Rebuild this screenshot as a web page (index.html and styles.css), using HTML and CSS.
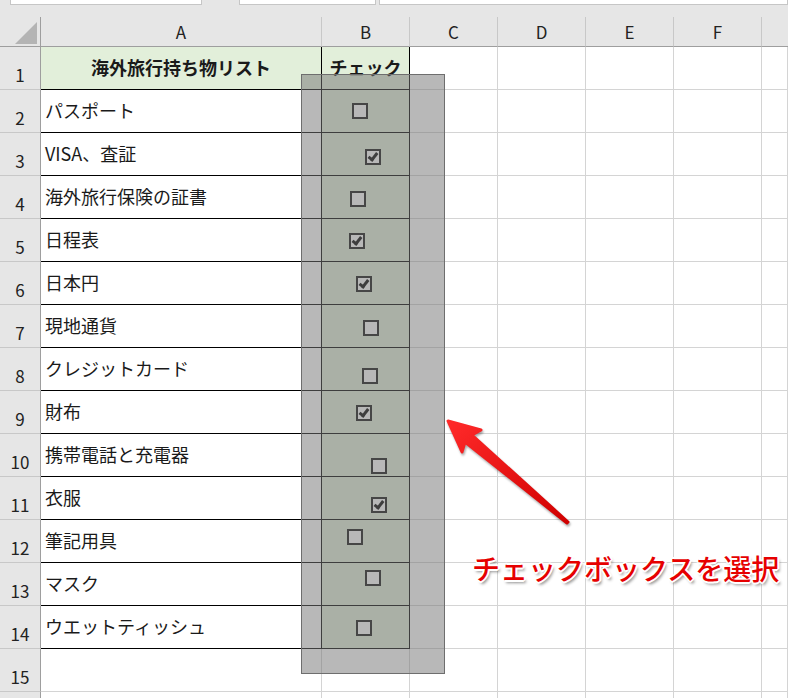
FILE: index.html
```html
<!doctype html>
<html lang="ja">
<head>
	<meta charset="UTF-8">
	<title>海外旅行持ち物リスト</title>
	<link rel="stylesheet" href="styles.css">
</head>
<body>
	<div class="app">
		<div class="toolbar">
			<div class="field name-box"></div>
			<div class="field fx-box"></div>
			<div class="field formula-box"></div>
		</div>

		<div class="sheet">
			<div class="corner"><span class="tri"></span></div>
			<div class="col-head">A</div>
			<div class="col-head">B</div>
			<div class="col-head">C</div>
			<div class="col-head">D</div>
			<div class="col-head">E</div>
			<div class="col-head">F</div>
			<div class="col-head last"></div>

			<div class="row-head">1</div>
			<div class="cell t g bold center">海外旅行持ち物リスト</div>
			<div class="cell t g bold center">チェック</div>
			<div class="cell"></div><div class="cell"></div><div class="cell"></div><div class="cell"></div><div class="cell"></div>

			<div class="row-head">2</div>
			<div class="cell t">パスポート</div><div class="cell t g"></div>
			<div class="cell"></div><div class="cell"></div><div class="cell"></div><div class="cell"></div><div class="cell"></div>

			<div class="row-head">3</div>
			<div class="cell t">VISA、査証</div><div class="cell t g"></div>
			<div class="cell"></div><div class="cell"></div><div class="cell"></div><div class="cell"></div><div class="cell"></div>

			<div class="row-head">4</div>
			<div class="cell t">海外旅行保険の証書</div><div class="cell t g"></div>
			<div class="cell"></div><div class="cell"></div><div class="cell"></div><div class="cell"></div><div class="cell"></div>

			<div class="row-head">5</div>
			<div class="cell t">日程表</div><div class="cell t g"></div>
			<div class="cell"></div><div class="cell"></div><div class="cell"></div><div class="cell"></div><div class="cell"></div>

			<div class="row-head">6</div>
			<div class="cell t">日本円</div><div class="cell t g"></div>
			<div class="cell"></div><div class="cell"></div><div class="cell"></div><div class="cell"></div><div class="cell"></div>

			<div class="row-head">7</div>
			<div class="cell t">現地通貨</div><div class="cell t g"></div>
			<div class="cell"></div><div class="cell"></div><div class="cell"></div><div class="cell"></div><div class="cell"></div>

			<div class="row-head">8</div>
			<div class="cell t">クレジットカード</div><div class="cell t g"></div>
			<div class="cell"></div><div class="cell"></div><div class="cell"></div><div class="cell"></div><div class="cell"></div>

			<div class="row-head">9</div>
			<div class="cell t">財布</div><div class="cell t g"></div>
			<div class="cell"></div><div class="cell"></div><div class="cell"></div><div class="cell"></div><div class="cell"></div>

			<div class="row-head">10</div>
			<div class="cell t">携帯電話と充電器</div><div class="cell t g"></div>
			<div class="cell"></div><div class="cell"></div><div class="cell"></div><div class="cell"></div><div class="cell"></div>

			<div class="row-head">11</div>
			<div class="cell t">衣服</div><div class="cell t g"></div>
			<div class="cell"></div><div class="cell"></div><div class="cell"></div><div class="cell"></div><div class="cell"></div>

			<div class="row-head">12</div>
			<div class="cell t">筆記用具</div><div class="cell t g"></div>
			<div class="cell"></div><div class="cell"></div><div class="cell"></div><div class="cell"></div><div class="cell"></div>

			<div class="row-head">13</div>
			<div class="cell t">マスク</div><div class="cell t g"></div>
			<div class="cell"></div><div class="cell"></div><div class="cell"></div><div class="cell"></div><div class="cell"></div>

			<div class="row-head">14</div>
			<div class="cell t">ウエットティッシュ</div><div class="cell t g"></div>
			<div class="cell"></div><div class="cell"></div><div class="cell"></div><div class="cell"></div><div class="cell"></div>

			<div class="row-head">15</div>
			<div class="cell"></div><div class="cell"></div>
			<div class="cell"></div><div class="cell"></div><div class="cell"></div><div class="cell"></div><div class="cell"></div>

			<div class="row-head"></div>
			<div class="cell"></div><div class="cell"></div>
			<div class="cell"></div><div class="cell"></div><div class="cell"></div><div class="cell"></div><div class="cell"></div>
		</div>

		<!-- フォームコントロールのチェックボックス（シート上に浮いている） -->
		<div class="box" style="left:352px;top:103px"></div>
		<div class="box on" style="left:365px;top:149px"></div>
		<div class="box" style="left:350px;top:191px"></div>
		<div class="box on" style="left:349px;top:233px"></div>
		<div class="box on" style="left:356px;top:276px"></div>
		<div class="box" style="left:363px;top:320px"></div>
		<div class="box" style="left:362px;top:368px"></div>
		<div class="box on" style="left:356px;top:405px"></div>
		<div class="box" style="left:371px;top:458px"></div>
		<div class="box on" style="left:371px;top:497px"></div>
		<div class="box" style="left:347px;top:529px"></div>
		<div class="box" style="left:365px;top:570px"></div>
		<div class="box" style="left:356px;top:620px"></div>

		<div class="selection"></div>

		<svg class="arrow" width="788" height="698" viewBox="0 0 788 698">
			<defs>
				<linearGradient id="red" x1="0" y1="0" x2="1" y2="1">
					<stop offset="0" stop-color="#ff2a2a"/>
					<stop offset="1" stop-color="#d00000"/>
				</linearGradient>
			</defs>
			<polygon points="448,421 481,430 472,435 568,522 567,523 465,442 462,452"
				fill="url(#red)" stroke="url(#red)" stroke-width="3" stroke-linejoin="round"/>
		</svg>

		<div class="callout">チェックボックスを選択</div>
	</div>
</body>
</html>
```

FILE: styles.css
```css
html, body{
	margin: 0;
	height: 100%;
	overflow: hidden;
}
body{
	background: #fff;
	font-family: "Noto Sans CJK JP", "Noto Sans", sans-serif;
	color: #1a1a1a;
}
.app{
	position: relative;
	width: 788px;
	height: 698px;
	overflow: hidden;
}

/* 上の数式バー */
.toolbar{
	display: flex;
	height: 17px;
	background: #e6e6e6;
}
.field{
	height: 4px;
	background: #fff;
	border: 1px solid #c6c6c6;
	border-top: 0;
}
.name-box{
	width: 190px;
	margin-left: 10px;
}
.fx-box{
	width: 135px;
	margin-left: 37px;
}
.formula-box{
	flex: 1;
	margin-left: 3px;
}

/* シート */
.sheet{
	display: grid;
	grid-template-columns: 41px 281px 88px 88px 88px 88px 88px 1fr;
	grid-template-rows: 30px;
	grid-auto-rows: 43px;
	font-size: 18px;
}
.corner{
	position: relative;
	background: #e6e6e6;
	border-right: 1px solid #9e9e9e;
	border-bottom: 1px solid #9e9e9e;
}
.tri{
	position: absolute;
	right: 3px;
	bottom: 2px;
	width: 0;
	height: 0;
	border-left: 22px solid transparent;
	border-bottom: 22px solid #b4b4b4;
}
.col-head{
	display: flex;
	align-items: center;
	justify-content: center;
	padding-bottom: 1px;
	background: #e6e6e6;
	border-right: 1px solid #c8c8c8;
	border-bottom: 1px solid #9e9e9e;
	font-size: 17px;
	color: #222;
}
.col-head.last{
	border-right: 0;
}
.row-head{
	display: flex;
	align-items: center;
	justify-content: center;
	padding-top: 12px;
	background: #e6e6e6;
	border-right: 1px solid #9e9e9e;
	border-bottom: 1px solid #c8c8c8;
	font-size: 17px;
	color: #222;
}
.cell{
	display: flex;
	align-items: center;
	padding: 0 0 3px 4px;
	border-right: 1px solid #d4d4d4;
	border-bottom: 1px solid #d4d4d4;
	white-space: nowrap;
}
.cell.t{
	border-right-color: #000;
	border-bottom-color: #000;
}
.cell.g{
	background: #e2efda;
}
.cell.bold{
	font-weight: bold;
}
.cell.center{
	justify-content: center;
	padding-left: 0;
}

/* チェックボックス */
.box{
	position: absolute;
	width: 12px;
	height: 12px;
	background: #fff;
	border: 2px solid #111;
}
.box.on::after{
	content: "";
	position: absolute;
	left: 3px;
	top: 0;
	width: 3px;
	height: 7px;
	border-right: 3px solid #000;
	border-bottom: 3px solid #000;
	transform: rotate(38deg);
}

/* 選択されたオブジェクトの範囲 */
.selection{
	position: absolute;
	left: 301px;
	top: 74px;
	width: 142px;
	height: 598px;
	background: rgba(118, 118, 118, 0.52);
	border: 1px solid #6e6e6e;
}

.arrow{
	position: absolute;
	left: 0;
	top: 0;
	filter: drop-shadow(1px 2px 1px rgba(0, 0, 0, 0.35));
}

.callout{
	position: absolute;
	left: 472px;
	top: 553px;
	font-size: 28px;
	line-height: 30px;
	font-weight: 500;
	color: #e60000;
	white-space: nowrap;
	text-shadow:
		-1px -1px 0 #fff, 1px -1px 0 #fff, -1px 1px 0 #fff, 1px 1px 0 #fff,
		-2px 0 0 #fff, 2px 0 0 #fff, 0 -2px 0 #fff, 0 2px 0 #fff,
		2px 3px 3px rgba(0, 0, 0, 0.45);
}
```
